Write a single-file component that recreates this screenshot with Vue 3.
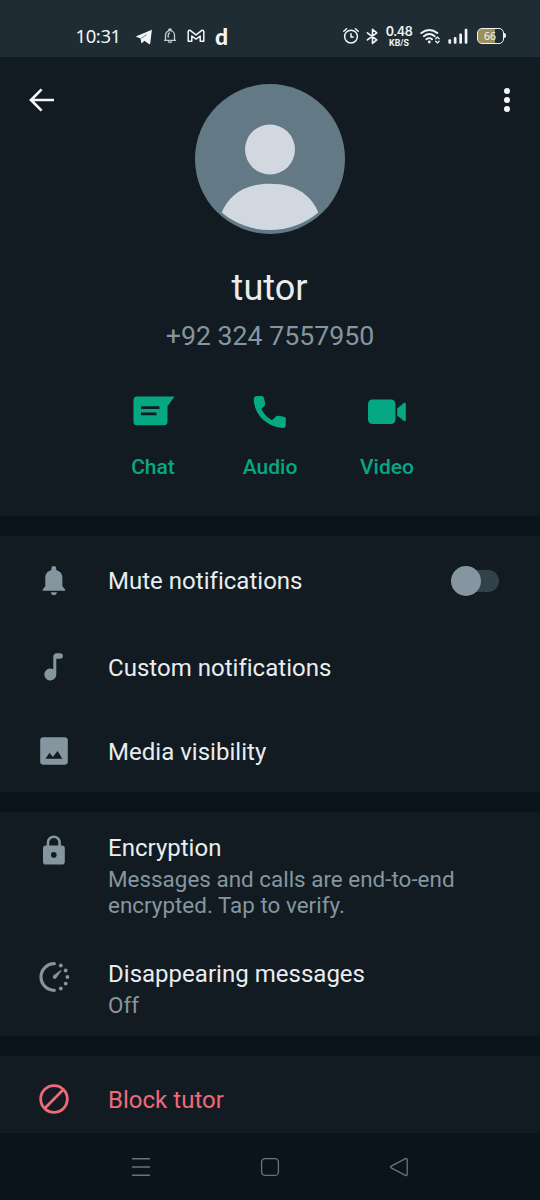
<script setup>
const actions = [
  { id: 'chat', label: 'Chat' },
  { id: 'audio', label: 'Audio' },
  { id: 'video', label: 'Video' },
]
</script>

<template>
  <div class="screen">
    <div class="status">
      <span class="time">10:31</span>
      <svg class="s-plane" width="18" height="16" viewBox="0 0 18 16"><path d="M.7 7.400 16.900.8 15.200 14.400Q15 15.600 14 15L9.300 11.700 7.200 14Q6.500 14.700 6.300 13.500L5.500 9.600Z" fill="#f1f5f7" /><path d="m6.200 9.500 5.200-3.900" stroke="#202c33" stroke-width=".6" /></svg>
      <svg class="s-bell" width="14" height="16" viewBox="0 0 14 16" fill="none" stroke="#c3cacd" stroke-width="1.300"><path d="M1 12.400h12M2.500 12.200V7.100A4.500 4.500 0 0 1 7 2.600a4.500 4.500 0 0 1 4.500 4.500v5.100M5.500 2.500a1.500 1.500 0 0 1 3 0M5 13.600q2 1.600 4 0M5.200 9.800V7q0-1.800 1.800-2" /></svg>
      <svg class="s-mail" width="18" height="14" viewBox="0 0 18 14" fill="none" stroke="#f1f5f7" stroke-width="1.500" stroke-linejoin="round"><path d="M1.200 12.300V2.600Q1.200 1.200 2.800 1.200L9 5.900l6.200-4.700q1.600 0 1.600 1.400v9.700h-3.600V7L9 10.100 4.800 7v5.300Z" /></svg>
      <span class="dee">d</span>
      <svg class="s-alarm" width="18" height="18" viewBox="0 0 18 18" fill="none" stroke="#f1f5f7" stroke-width="1.500" stroke-linecap="round"><circle cx="9" cy="9.600" r="6.400" /><path d="M1.800 4.200 4.600 1.700M16.200 4.200l-2.800-2.500M9 6.700v3.200h2.200" /></svg>
      <svg class="s-bt" width="13" height="17" viewBox="0 0 13 17" fill="none" stroke="#f1f5f7" stroke-width="1.600" stroke-linejoin="round" stroke-linecap="round"><path d="m1.400 4.800 9.400 7-4.300 3.600V1.300l4.300 3.500-9.400 7.100" /></svg>
      <div class="rate"><b class="num">0.48</b><b class="unit">KB/S</b></div>
      <svg class="s-wifi" width="21" height="17" viewBox="0 0 21 17" fill="none" stroke="#f1f5f7" stroke-width="1.900" stroke-linecap="round"><path d="M1.300 5.100q8-6.400 16 0M3.900 8.200q5.400-4.200 10.800 0M6.400 11.200q2.900-2.100 5.600 0" /><circle cx="9.300" cy="14" r="1.400" fill="#f1f5f7" stroke="none" /><path d="m15.700 10.800 1.700-1.700 1.700 1.700M15.700 13.200l1.700 1.700 1.700-1.700" stroke-width="1.300" /></svg>
      <svg class="s-signal" width="20" height="17" viewBox="0 0 20 17" fill="#f1f5f7"><rect x=".4" y="11.200" width="2.700" height="4.600" rx="1" /><rect x="5.800" y="9" width="2.700" height="6.800" rx="1" /><rect x="11.300" y="5.500" width="2.700" height="10.300" rx="1" /><rect x="16.700" y=".7" width="2.700" height="15.100" rx="1" /></svg>
      <div class="battery"><span>66</span></div>
    </div>

    <header class="profile">
      <svg class="back" width="26" height="24" viewBox="0 0 26 24" fill="none" stroke="#f4f7f8" stroke-width="2.700"><path d="M25 12H2.500M12.600 1.400 2 12l10.600 10.600" /></svg>
      <svg class="avatar" width="150" height="150" viewBox="0 0 150 150"><circle cx="75" cy="75" r="75" fill="#637985" /><circle cx="75" cy="65.500" r="25" fill="#d1d8e0" /><path d="M26.700 128.500C33 113 47 99.700 75 99.700s42 13.300 48.300 28.800A75 75 0 0 1 26.700 128.500Z" fill="#d1d8e0" /></svg>
      <svg class="more" width="8" height="26" viewBox="0 0 8 26" fill="#f4f7f8"><circle cx="4" cy="4" r="3" /><circle cx="4" cy="13" r="3" /><circle cx="4" cy="22" r="3" /></svg>
      <h1>tutor</h1>
      <p class="phone">+92 324 7557950</p>
      <div class="actions">
        <div v-for="a in actions" :key="a.id" class="action">
          <svg v-if="a.id === 'chat'" width="44" height="40" viewBox="0 0 44 40"><path d="M6 5.500H43.500L36.500 15.200V30.700Q36.500 34.200 33 34.200H6Q2.500 34.200 2.500 30.700V9Q2.500 5.500 6 5.500Z" fill="#06a884" /><path d="M10 16.700h18.500M10 22.900h15.500" stroke="#121b22" stroke-width="2.700" /></svg>
          <svg v-else-if="a.id === 'audio'" width="44" height="40" viewBox="0 0 44 40"><path d="M8.600 5h5.200q1.700 0 2.100 1.700l1.300 5.400q.3 1.300-.6 2.300l-3.200 3.700q3.700 7.500 10.600 11.100l3.900-3.800q1-.9 2.300-.7l6 1.100q1.600.3 1.600 2v6.800q0 2.300-2.300 2.300C18.600 36.200 5.800 23 5.800 8q0-3 2.800-3Z" fill="#06a884" /></svg>
          <svg v-else width="44" height="40" viewBox="0 0 44 40" fill="#06a884"><rect x="3" y="8.500" width="27.500" height="24.500" rx="4.500" /><path d="m32.200 17.500 6.400-5.300q2.200-1.700 2.200 1v15.500q0 2.700-2.200 1l-6.400-5.300Z" /></svg>
          <span>{{ a.label }}</span>
        </div>
      </div>
    </header>

    <section class="group notify">
      <div class="row mute">
        <svg width="30" height="34" viewBox="0 0 30 34" fill="#8596a0"><path d="M3.700 25.800v-1.300l2.600-3.200v-8.700q0-5.900 6.100-7.700V3.200q0-2.200 2.400-2.200t2.400 2.200v1.700q6.200 1.800 6.200 7.700v8.700l2.700 3.200v1.300ZM11.900 27.200h6q-.5 2.900-3 2.900t-3-2.900Z" /></svg>
        <span class="title">Mute notifications</span>
        <div class="toggle"><i></i></div>
      </div>
      <div class="row custom">
        <svg width="30" height="34" viewBox="0 0 30 34" fill="#8596a0"><path d="M14.300 19.300V6.800q0-3.500 3.500-3.500h3.200q2.900 0 2.900 2.700t-2.900 2.700h-3.700v15.800a6 6 0 1 1-3-5.200Z" /></svg>
        <span class="title">Custom notifications</span>
      </div>
      <div class="row media">
        <svg width="30" height="34" viewBox="0 0 30 34"><rect x="1.200" y="3.200" width="27.600" height="27.600" rx="3.200" fill="#8596a0" /><path d="m6.500 24.700 4-5.900 3.300 4.200 4.800-6 4.700 7.700Z" fill="#121b22" /></svg>
        <span class="title">Media visibility</span>
      </div>
    </section>

    <section class="group privacy">
      <div class="row encryption">
        <svg width="30" height="34" viewBox="0 0 30 34"><rect x="4" y="11.400" width="21.800" height="19.200" rx="2.800" fill="#8596a0" /><path d="M9 13.400V8.500a5.800 5.800 0 0 1 11.600 0V13.400" fill="none" stroke="#8596a0" stroke-width="2.600" /><circle cx="14.800" cy="20.900" r="2.800" fill="#121b22" /></svg>
        <div class="copy">
          <span class="title">Encryption</span>
          <span class="sub">Messages and calls are end-to-end<br />encrypted. Tap to verify.</span>
        </div>
      </div>
      <div class="row vanish">
        <svg width="32" height="34" viewBox="0 0 32 34"><path d="M15.300 3.700A13.300 13.300 0 1 0 15.300 30.300" fill="none" stroke="#8596a0" stroke-width="3.200" stroke-linecap="round" /><g fill="#8596a0"><circle cx="21.800" cy="5.500" r="1.900" /><circle cx="26.700" cy="10.500" r="1.900" /><circle cx="28.400" cy="17" r="1.900" /><circle cx="26.700" cy="23.600" r="1.900" /><circle cx="21.800" cy="28.500" r="1.900" /><path d="m21.400 10.300q1.100-.5.900.7l-5.200 7.200q-1.300 1.500-2.800.1-1.400-1.500.1-2.900Z" /></g></svg>
        <div class="copy">
          <span class="title">Disappearing messages</span>
          <span class="sub">Off</span>
        </div>
      </div>
    </section>

    <section class="group danger">
      <div class="row block">
        <svg width="32" height="34" viewBox="0 0 32 34" fill="none" stroke="#ef697a" stroke-width="2.800"><circle cx="15" cy="17" r="13.300" /><path d="M5.600 26.400 24.400 7.600" /></svg>
        <span class="title">Block tutor</span>
      </div>
    </section>

    <nav class="navbar">
      <svg width="20" height="20" viewBox="0 0 20 20" stroke="#6b737a" stroke-width="1.600"><path d="M1 1.800h18M1 10h18M1 18.200h18" /></svg>
      <svg width="20" height="20" viewBox="0 0 20 20" fill="none" stroke="#6b737a" stroke-width="1.300"><rect x="1.600" y="1.600" width="16.800" height="16.800" rx="3.500" /></svg>
      <svg width="20" height="20" viewBox="0 0 20 20" fill="none" stroke="#6b737a" stroke-width="1.300" stroke-linejoin="round"><path d="M2.200 9.100 16.500 1.700q1.700-.7 1.700 1v14.600q0 1.700-1.700 1L2.200 10.900q-1.500-.9 0-1.800Z" /></svg>
    </nav>
  </div>
</template>

<style>
body { background: #0b141a; }
</style>

<style scoped>
.screen {
  width: 540px;
  height: 1200px;
  overflow: hidden;
  display: flex;
  flex-direction: column;
  background: #0b141a;
  color: #e9edef;
  font-family: Roboto, "Liberation Sans", sans-serif;
}
svg { display: block; flex: none; }

.status {
  height: 57px;
  flex: none;
  display: flex;
  align-items: flex-start;
  background: #202c33;
  color: #f1f5f7;
}
.time {
  width: 58px;
  margin: 23.500px 0 0 75.500px;
  font: 400 18.500px/24px "Noto Sans", sans-serif;
  letter-spacing: -.4px;
}
.s-plane { margin: 29px 0 0 1.500px; }
.s-bell { margin: 28px 0 0 10px; }
.s-mail { margin: 29px 0 0 10px; }
.dee { width: 14px; margin: 22px 0 0 10px; font: 900 23px/28px Lato, sans-serif; }
.s-alarm { margin: 27px 0 0 113px; }
.s-bt { margin: 28px 0 0 6px; }
.rate {
  width: 28px;
  margin: 25px 0 0 6px;
  display: flex;
  flex-direction: column;
  align-items: center;
}
.num { font: 600 12.500px/14px Inter, sans-serif; letter-spacing: -.4px; }
.unit { font: 700 8.800px/9px Roboto, sans-serif; }
.s-wifi { margin: 28px 0 0 7px; }
.s-signal { margin: 28px 0 0 7px; }
.battery {
  position: relative;
  box-sizing: border-box;
  width: 27px;
  height: 16px;
  margin: 28px 0 0 8.500px;
  border: 1.500px solid #f1f5f7;
  border-radius: 5px;
  background: linear-gradient(90deg, #9b9059 66%, #202c33 66%);
  font: 400 10.500px/14px "Noto Sans", sans-serif;
  text-align: center;
}
.battery::after {
  content: "";
  position: absolute;
  right: -3px;
  top: 4px;
  width: 2px;
  height: 5px;
  border-radius: 0 2px 2px 0;
  background: #f1f5f7;
}

.profile {
  height: 459px;
  flex: none;
  display: grid;
  grid-template-columns: 195px 150px 195px;
  grid-template-rows: 204px 54px 42px 159px;
  background: #121b22;
}
.back { margin: 30.500px 0 0 28.500px; }
.avatar { margin-top: 27px; }
.more { justify-self: end; margin: 30px 29px 0 0; }
h1 {
  grid-column: 1 / -1;
  margin: 0 1px 0 0;
  font-size: 36px;
  font-weight: 400;
  line-height: 54px;
  text-align: center;
}
.phone {
  grid-column: 1 / -1;
  margin: 0;
  font-size: 26.700px;
  line-height: 42px;
  text-align: center;
  color: #8596a0;
}
.actions {
  grid-column: 1 / -1;
  display: flex;
  justify-content: center;
  padding-top: 34px;
}
.action {
  width: 117px;
  display: flex;
  flex-direction: column;
  align-items: center;
  color: #06a884;
  font-size: 21px;
  font-weight: 500;
  line-height: 28px;
}
.action span { margin-top: 22px; }

.group { flex: none; background: #121b22; box-sizing: border-box; }
.notify { height: 256px; margin-top: 20px; padding-top: 2px; }
.privacy { height: 224px; margin-top: 20px; padding-top: 18px; }
.danger { height: 77px; margin-top: 20px; }

.row { display: flex; align-items: center; padding-left: 39px; }
.row > svg { width: 32px; margin-right: 37px; }
.row > svg[width="30"] { width: 30px; margin-right: 39px; }
.mute { height: 87px; }
.custom { height: 84px; }
.media { height: 84px; }
.title { font-size: 24px; line-height: 36px; letter-spacing: .02px; }
.mute .title { margin-top: -2px; }
.custom .title, .media .title { margin-top: 1px; }
.encryption { align-items: flex-start; height: 126px; }
.encryption > svg { margin-top: 4px; }
.vanish { align-items: flex-start; }
.vanish > svg { margin-top: 4px; }
.copy { display: flex; flex-direction: column; }
.sub { color: #8596a0; font-size: 22.400px; line-height: 26.400px; letter-spacing: .02px; }
.block { height: 86px; color: #ef697a; }
.block .title { margin-top: 2px; }

.toggle {
  box-sizing: border-box;
  width: 48px;
  height: 22px;
  margin: 0 41px 2px auto;
  display: flex;
  align-items: center;
  border-radius: 11px;
  background: linear-gradient(90deg, transparent 12px, #33414a 12px);
}
.toggle i { width: 30px; height: 30px; flex: none; border-radius: 50%; background: #8596a0; }

.navbar {
  flex: 1;
  display: flex;
  justify-content: space-between;
  align-items: center;
  padding: 0 131px;
}
</style>
